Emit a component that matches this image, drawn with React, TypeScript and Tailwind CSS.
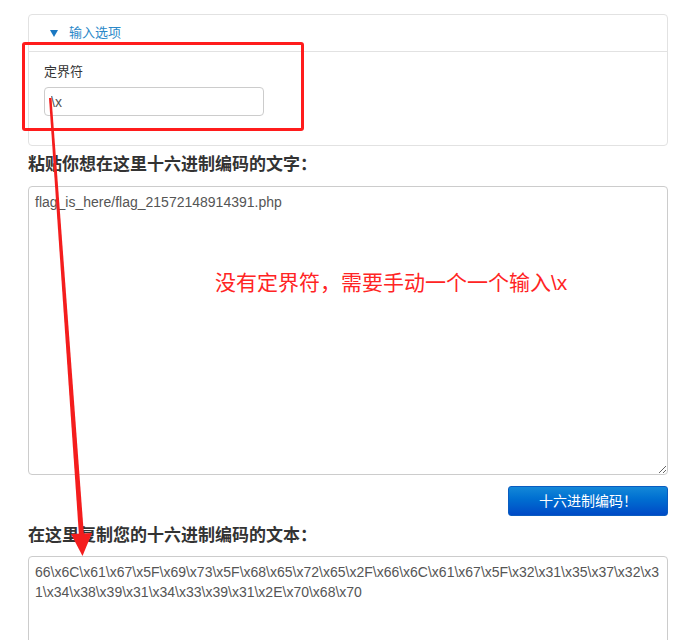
import React from "react";

export default function App() {
  const hex =
    "66\\x6C\\x61\\x67\\x5F\\x69\\x73\\x5F\\x68\\x65\\x72\\x65\\x2F\\x66\\x6C\\x61\\x67\\x5F\\x32\\x31\\x35\\x37\\x32\\x31\\x34\\x38\\x39\\x31\\x34\\x33\\x39\\x31\\x2E\\x70\\x68\\x70";
  return (
    <div className="relative w-[688px] h-[640px] overflow-hidden bg-white text-[#333] font-['Liberation_Sans','Noto_Sans_CJK_SC',sans-serif]">
      <div className="flex flex-col pl-[28px] pt-[14px] w-[668px]">
        {/* options panel */}
        <div className="flex flex-col h-[132px] border border-[#e2e2e2] rounded-[4px]">
          <div className="flex items-center h-[37px] border-b border-[#e2e2e2] pl-[21px] shrink-0">
            <svg width="8" height="7" viewBox="0 0 8 7">
              <polygon points="0,0 8,0 4,7" fill="#1a78c2" />
            </svg>
            <span className="ml-[11px] text-[13px] leading-[20px] text-[#2a88c8]">输入选项</span>
          </div>
          <div className="flex flex-col pl-[15px] pt-[10px]">
            <div className="text-[13px] leading-[20px] text-[#333]">定界符</div>
            <input
              readOnly
              value="\x"
              className="mt-[5px] w-[220px] h-[29px] border border-[#ccc] rounded-[4px] px-[6px] text-[14px] text-[#555] outline-none font-['Liberation_Sans',sans-serif]"
            />
          </div>
        </div>

        <div className="mt-[9px] mb-[11px] text-[17px] leading-[20px] font-bold text-[#333]">
          粘贴你想在这里十六进制编码的文字：
        </div>
        <textarea
          readOnly
          value="flag_is_here/flag_21572148914391.php"
          className="h-[289px] w-full border border-[#ccc] rounded-[4px] px-[6px] py-[5px] text-[14px] leading-[20px] text-[#555] outline-none font-['Liberation_Sans',sans-serif]"
        />
        <div className="flex justify-end mt-[11px]">
          <button className="w-[160px] h-[30px] rounded-[3px] border border-[#0a5cc0] bg-gradient-to-b from-[#1488d8] to-[#0049c6] text-white text-[14px] leading-[20px]">
            十六进制编码！
          </button>
        </div>
        <div className="mt-[10px] mb-[10px] text-[17px] leading-[20px] font-bold text-[#333]">
          在这里复制您的十六进制编码的文本：
        </div>
        <textarea
          readOnly
          value={hex}
          className="h-[200px] w-full border border-[#ccc] rounded-[4px] px-[6px] py-[5px] text-[14px] leading-[20px] text-[#555] outline-none break-all font-['Liberation_Sans',sans-serif]"
        />
      </div>

      {/* annotations */}
      <div className="absolute left-[22px] top-[42px] w-[282px] h-[89px] border-[3px] border-[#ff1c1c] rounded-[3px] pointer-events-none" />
      <div className="absolute left-[215px] top-[269px] text-[21px] leading-[28px] text-[#ff2424] whitespace-nowrap font-['Liberation_Sans','Noto_Sans_CJK_SC',sans-serif]">
        没有定界符，需要手动一个一个输入\x
      </div>
      <svg className="absolute left-0 top-0 pointer-events-none" width="688" height="640">
        <polygon points="49,98 51.5,98 84,536 79,536" fill="#f41d1d" />
        <polygon points="71,534 92,533 82.5,556" fill="#f41d1d" />
      </svg>
    </div>
  );
}
